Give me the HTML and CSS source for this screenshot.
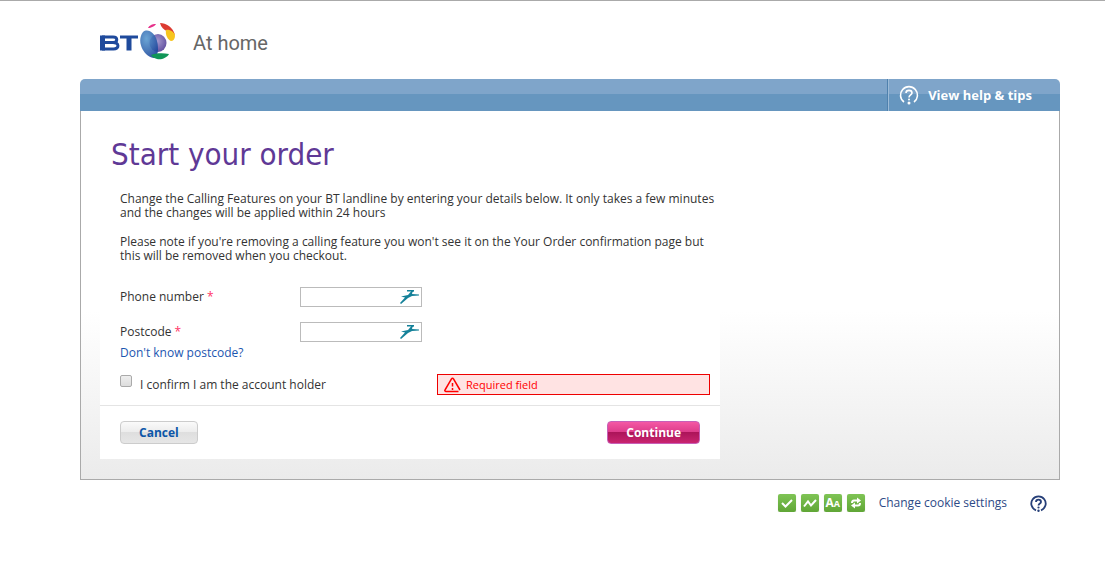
FILE: index.html
```
<!DOCTYPE html>
<html lang="en">
<head>
    <meta charset="UTF-8">
    <meta name="viewport" content="width=device-width, initial-scale=1.0">
    <title>BT - Start your order</title>
    <link rel="stylesheet" href="styles.css">
</head>
<body>
    <div class="page">
        <header class="header">
            <svg class="logo" width="76" height="40" viewBox="0 0 76 40" role="img" aria-label="BT">
                <defs>
                    <radialGradient id="globe" cx="35%" cy="30%" r="75%">
                        <stop offset="0" stop-color="#5b9bd0"/>
                        <stop offset="1" stop-color="#1d479b"/>
                    </radialGradient>
                    <radialGradient id="ball" cx="45%" cy="40%" r="65%">
                        <stop offset="0" stop-color="#a79bd0"/>
                        <stop offset="1" stop-color="#5d4b9d"/>
                    </radialGradient>
                </defs>
                <g fill="none" stroke="#1f4a9c">
                    <path stroke-width="3" d="M2 14H13C18 14 18 19.500 13 19.500H2M13 19.500C19.500 19.500 19.500 26 13.500 26H2"/>
                    <path stroke-width="5" d="M2.500 12.500V27.500M29 13V27.500"/>
                    <path stroke-width="3" d="M20 14H38"/>
                </g>
                <ellipse cx="58" cy="20" rx="8.500" ry="9" fill="url(#ball)"/>
                <path d="M43 9C48 5 55 10 57 18C59 26 58 34 54 35C46 35 35 20 43 9Z" fill="url(#globe)" fill-opacity="0.9"/>
                <path d="M51 32C56 30 63 30 69 31C67 35 61 37 57 36C54 35 52 34 51 32Z" fill="#109657"/>
                <path d="M48 5C49 2 54 0.500 56 1C55 3 51 5 48 5Z" fill="#e6308a"/>
                <path d="M60 0C66 0 73 4 75 12C72 9 62 9 60 0Z" fill="#dc3b32"/>
                <path d="M66 7C69 6 75 9 75 13C75 16 73 18 71 18C68 17 65 12 66 7Z" fill="#f7c51e"/>
            </svg>
            <span class="site-name">At home</span>
        </header>

        <nav class="top-bar">
            <a class="help-link" href="#">
                <svg width="20" height="20" viewBox="0 0 20 20" fill="none" stroke="#fff" stroke-width="1.600" aria-hidden="true">
                    <path d="M5 17A8.500 8.500 0 1 1 15 17"/>
                    <path d="M7 8C7 4.500 13 4.500 13 8C13 10 10 10 10 12.500"/>
                    <circle cx="10" cy="14.500" r="1" fill="#fff" stroke="none"/>
                    <circle cx="10" cy="18" r="1.500" fill="#fff" stroke="none"/>
                </svg>
                View help &amp; tips
            </a>
        </nav>

        <main class="panel">
            <form class="order-form">
                <h1>Start your order</h1>
                <div class="intro">
                    <p>Change the Calling Features on your BT landline by entering your details below. It only takes a few minutes and the changes will be applied within 24 hours</p>
                    <p>Please note if you're removing a calling feature you won't see it on the Your Order confirmation page but this will be removed when you checkout.</p>
                </div>

                <div class="field">
                    <label for="phone">Phone number <span class="star">*</span></label>
                    <div class="text-box">
                        <input id="phone" type="text">
                        <svg width="20" height="14" viewBox="0 0 20 14" aria-hidden="true">
                            <path d="M7 0H14V1.500L12.500 2L12 4L19 4.500V5.500L12 6L8 8L1 14L0 13L5 7.500L1 6.500L8 5L11 1.500H7Z" fill="#148199"/>
                        </svg>
                    </div>
                </div>
                <div class="field">
                    <label for="postcode">Postcode <span class="star">*</span></label>
                    <div class="text-box">
                        <input id="postcode" type="text">
                        <svg width="20" height="14" viewBox="0 0 20 14" aria-hidden="true">
                            <path d="M7 0H14V1.500L12.500 2L12 4L19 4.500V5.500L12 6L8 8L1 14L0 13L5 7.500L1 6.500L8 5L11 1.500H7Z" fill="#148199"/>
                        </svg>
                    </div>
                </div>
                <a class="postcode-link" href="#">Don't know postcode?</a>

                <div class="confirm">
                    <input id="holder" type="checkbox">
                    <label for="holder">I confirm I am the account holder</label>
                    <div class="error">
                        <svg width="17" height="16" viewBox="0 0 17 16" fill="none" stroke="#f00" stroke-width="1.500" aria-hidden="true">
                            <path d="M14.500 14.500H2C1 14.500 0.500 13.500 1 13L7.500 2C8 1 9 1 9.500 2L16 13"/>
                            <path d="M8.500 6V9.500M8.500 11V13"/>
                        </svg>
                        Required field
                    </div>
                </div>

                <div class="buttons">
                    <button class="button cancel" type="button">Cancel</button>
                    <button class="button continue" type="submit">Continue</button>
                </div>
            </form>
        </main>

        <footer class="footer">
            <div class="cookie-icons">
                <svg class="cookie-icon" viewBox="0 0 18 18" aria-hidden="true"><path d="M4 9L7.500 12.500L14 6"/></svg>
                <svg class="cookie-icon" viewBox="0 0 18 18" aria-hidden="true"><path d="M3 12.500L7 7.500L10 11.500L15 6"/></svg>
                <span class="cookie-icon letters">A<small>A</small></span>
                <svg class="cookie-icon" viewBox="0 0 18 18" aria-hidden="true">
                    <path d="M5 9C5 7 6 6.500 7 6.500H11M13 9C13 11 12 11.500 11 11.500H7"/>
                    <path class="head" d="M10 3.500L14 6.500L10 9.500ZM8 8.500L4 11.500L8 14.500Z"/>
                </svg>
            </div>
            <a class="cookie-link" href="#">Change cookie settings</a>
            <a class="cookie-help" href="#" aria-label="Cookie help">
                <svg width="17" height="17" viewBox="0 0 17 17" fill="none" stroke="#263f78" stroke-width="1.800" aria-hidden="true">
                    <path d="M6 15.300A7.200 7.200 0 1 1 11 15.300"/>
                    <path d="M6 7C6 3.800 11 3.800 11 7C11 8.500 8.500 8.500 8.500 10.500"/>
                    <circle cx="8.500" cy="12.500" r="1.100" fill="#263f78" stroke="none"/>
                    <circle cx="8.500" cy="15.800" r="1.200" fill="#263f78" stroke="none"/>
                </svg>
            </a>
        </footer>
    </div>
</body>
</html>
```
FILE: styles.css
```
* {
    box-sizing: border-box;
}

body {
    margin: 0;
    border-top: 1px solid #aaa;
    background-color: #fff;
    color: #333;
    font-family: "Open Sans", "Noto Sans", sans-serif;
    font-size: 12px;
    line-height: 14px;
}

a {
    text-decoration: none;
}

.page {
    margin: 0 45px 0 80px;
}

.header {
    display: flex;
    align-items: flex-start;
    gap: 17px;
    padding: 22px 20px 16px;
}

.site-name {
    color: #666;
    font-family: Roboto, sans-serif;
    font-size: 20px;
    line-height: 40px;
}

/* blue bar */
.top-bar {
    display: flex;
    justify-content: flex-end;
    height: 32px;
    border-radius: 5px 5px 0 0;
    background: linear-gradient(#7fa5ca 15px, #6696bf 15px);
}

.help-link {
    display: flex;
    align-items: center;
    gap: 9px;
    padding: 0 28px 0 11px;
    border-left: 1px solid #4f81ad;
    box-shadow: inset 1px 0 #9cbbd7;
    color: #fff;
    font-size: 13px;
    font-weight: bold;
}

.panel {
    padding: 0 19px 20px;
    border: 1px solid #aaa;
    border-top: 0;
    background: linear-gradient(#fff 200px, #ebebeb);
}

.order-form {
    max-width: 620px;
    background-color: #fff;
}

h1 {
    margin: 0;
    padding: 22px 11px 17px;
    color: #5f3996;
    font-family: "DejaVu Sans Condensed", "Open Sans", sans-serif;
    font-size: 31px;
    font-weight: normal;
    line-height: 42px;
}

.intro {
    padding-left: 20px;
}

.intro p {
    margin: 0 0 15px;
}

/* form rows */
.field {
    display: flex;
    align-items: center;
    padding: 9px 20px 6px;
}

.field label {
    width: 180px;
}

.star {
    color: #f36;
}

.text-box {
    position: relative;
    width: 122px;
}

.text-box input {
    display: block;
    width: 100%;
    height: 20px;
    padding: 0 24px 0 4px;
    border: 1px solid #bbb;
    font: inherit;
}

.text-box svg {
    position: absolute;
    top: 3px;
    right: 2px;
}

.postcode-link {
    display: block;
    padding: 0 20px;
    margin-top: -2px;
    color: #1c56b0;
}

.confirm {
    display: flex;
    align-items: center;
    padding: 14px 10px 10px 20px;
    border-bottom: 1px solid #e4e4e4;
}

.confirm input {
    appearance: none;
    width: 12px;
    height: 12px;
    margin: 0 8px 8px 0;
    border: 1px solid #aaa;
    border-radius: 2px;
    background: linear-gradient(#eee, #ddd);
}

.error {
    display: flex;
    align-items: center;
    gap: 5px;
    width: 273px;
    height: 21px;
    margin-left: auto;
    padding: 0 6px;
    border: 1px solid #e00;
    background-color: #ffe3e3;
    color: #f00;
    font-size: 11px;
}

.buttons {
    display: flex;
    justify-content: space-between;
    padding: 15px 20px;
}

.button {
    height: 23px;
    padding: 0 18px;
    border: 1px solid #ccc;
    border-radius: 4px;
    font: inherit;
    font-weight: bold;
    cursor: pointer;
}

.cancel {
    background: linear-gradient(#fafafa, #ececec 48%, #dedede 48%, #e6e6e6);
    color: #0c56a8;
}

.continue {
    border-color: #c75fb8;
    background: linear-gradient(#f458a4, #dd3c8b 48%, #ab1459 48%, #c9246f);
    color: #fff;
}

/* cookie strip */
.footer {
    display: flex;
    justify-content: flex-end;
    align-items: center;
    padding: 14px 13px 0 0;
}

.cookie-icons {
    display: flex;
    gap: 5px;
    margin-right: 14px;
}

.cookie-icon {
    width: 18px;
    height: 18px;
    border-radius: 2px;
    background: linear-gradient(#7fc455, #60a636);
    box-shadow: 0 1px 1px #ccc;
    fill: none;
    stroke: #fff;
    stroke-width: 2;
}

.cookie-icon .head {
    fill: #fff;
    stroke: none;
}

.letters {
    color: #fff;
    font-size: 12px;
    font-weight: bold;
    line-height: 18px;
    text-align: center;
}

.letters small {
    font-size: 9px;
}

.cookie-link {
    color: #2d4a86;
}

.cookie-help {
    display: flex;
    margin-left: 23px;
}
```
